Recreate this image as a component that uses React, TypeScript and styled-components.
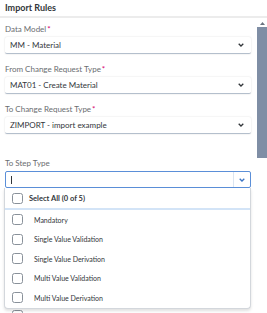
import React, { useState } from 'react'
import styled, { createGlobalStyle } from 'styled-components'

const GlobalStyle = createGlobalStyle`
  html, body {
    margin: 0;
    padding: 0;
    background: #ffffff;
  }
  body {
    font-family: Lato, 'Noto Sans', 'Liberation Sans', Arial, sans-serif;
    color: #32363a;
  }
`

const Page = styled.div`
  width: 267px;
  height: 313px;
  overflow: hidden;
  display: flex;
  flex-direction: column;
  background: #ffffff;
`

const Header = styled.div`
  height: 15px;
  padding: 0 0 1px 5px;
  display: flex;
  align-items: center;
  font-size: 9px;
  font-weight: 700;
  color: #32363a;
  border-bottom: 2px solid #ececec;
  flex-shrink: 0;
`

const Body = styled.div`
  flex: 1;
  display: flex;
  min-height: 0;
`

const Content = styled.div`
  position: relative;
  width: 246px;
  padding: 6px 0 0 5px;
  display: flex;
  flex-direction: column;
`

const Field = styled.div<{ $gap?: number }>`
  display: flex;
  flex-direction: column;
  gap: 3px;
  margin-bottom: ${p => p.$gap ?? 10}px;
`

const Label = styled.div`
  height: 10px;
  line-height: 10px;
  font-size: 8px;
  color: #6a6d70;

  span {
    color: #d5006d;
    margin-left: 1px;
  }
`

const SelectBox = styled.div`
  height: 17px;
  box-sizing: border-box;
  display: flex;
  align-items: center;
  justify-content: space-between;
  padding: 0 7px 0 5px;
  background: #ffffff;
  border-radius: 2px;
  box-shadow: 0 0 2px rgba(0, 0, 0, 0.14);
  border-bottom: 1px solid #b4bfcc;
  font-size: 8px;
  color: #32363a;
`

const InputBox = styled.div`
  height: 17px;
  box-sizing: border-box;
  display: flex;
  align-items: stretch;
  border: 1px solid #5b8fd8;
  border-radius: 2px;
  background: #ffffff;
`

const InputText = styled.div`
  flex: 1;
  display: flex;
  align-items: center;
  padding-left: 5px;

  &::before {
    content: '';
    width: 1px;
    height: 8px;
    background: #32363a;
  }
`

const InputButton = styled.div`
  width: 16px;
  display: flex;
  align-items: center;
  justify-content: center;
  border-left: 1px solid #dbe5f1;
`

const Dropdown = styled.div`
  position: absolute;
  left: 4px;
  top: 170px;
  width: 247px;
  box-sizing: border-box;
  background: #ffffff;
  border: 1px solid #d3d7dc;
  border-top: none;
  border-radius: 0 0 4px 4px;
  box-shadow: 0 2px 3px rgba(0, 0, 0, 0.12);
  z-index: 2;
`

const AllRow = styled.div`
  height: 20px;
  display: flex;
  align-items: center;
  gap: 6px;
  padding-left: 7px;
  font-size: 7.5px;
  font-weight: 700;
  color: #32363a;
  border-bottom: 2px solid #d3e4f7;
`

const ItemRow = styled.div`
  height: 19.5px;
  display: flex;
  align-items: center;
  gap: 11px;
  padding-left: 7px;
  font-size: 7px;
  color: #32363a;
`

const Box = styled.div<{ $checked?: boolean }>`
  width: 11px;
  height: 11px;
  box-sizing: border-box;
  border: 1px solid #89919a;
  border-radius: 2.5px;
  background: ${p => (p.$checked ? '#0a6ed1' : '#ffffff')};
  flex-shrink: 0;
`

const Behind = styled.div`
  margin-top: 122px;
  padding-left: 7px;
`

const Track = styled.div`
  width: 10px;
  margin-left: 6px;
  display: flex;
  flex-direction: column;
  align-items: stretch;
  padding-top: 2px;
`

const Arrow = styled.div`
  height: 7px;
  display: flex;
  justify-content: center;
  align-items: center;
`

const Thumb = styled.div`
  height: 131px;
  background: #7f8ea5;
`

const Chevron = ({ color = '#32363a' }: { color?: string }) => (
  <svg width="6" height="4" viewBox="0 0 6 4">
    <path d="M0.7 0.8 L3 3 L5.3 0.8" fill="none" stroke={color} strokeWidth="1.3" />
  </svg>
)

const selects = [
  { label: 'Data Model', value: 'MM - Material' },
  { label: 'From Change Request Type', value: 'MAT01 - Create Material' },
  { label: 'To Change Request Type', value: 'ZIMPORT - import example' },
]

const stepTypes = [
  'Mandatory',
  'Single Value Validation',
  'Single Value Derivation',
  'Multi Value Validation',
  'Multi Value Derivation',
]

export default function App() {
  const [checked, setChecked] = useState<string[]>([])

  const toggle = (name: string) =>
    setChecked(c => (c.includes(name) ? c.filter(x => x !== name) : [...c, name]))

  return (
    <Page>
      <GlobalStyle />
      <Header>Import Rules</Header>
      <Body>
        <Content>
          {selects.map((s, i) => (
            <Field key={s.label} $gap={i === 2 ? 24 : 10}>
              <Label>
                {s.label}
                <span>*</span>
              </Label>
              <SelectBox>
                {s.value}
                <Chevron />
              </SelectBox>
            </Field>
          ))}
          <Field $gap={0}>
            <Label>To Step Type</Label>
            <InputBox>
              <InputText />
              <InputButton>
                <Chevron color="#3b74c4" />
              </InputButton>
            </InputBox>
          </Field>
          <Behind>
            <Box />
          </Behind>
          <Dropdown>
            <AllRow>
              <Box $checked={checked.length === stepTypes.length} />
              Select All ({checked.length} of {stepTypes.length})
            </AllRow>
            {stepTypes.map(t => (
              <ItemRow key={t} onClick={() => toggle(t)}>
                <Box $checked={checked.includes(t)} />
                {t}
              </ItemRow>
            ))}
          </Dropdown>
        </Content>
        <Track>
          <Arrow>
            <svg width="5" height="3" viewBox="0 0 5 3">
              <path d="M0 3 L2.5 0 L5 3 Z" fill="#6b7480" />
            </svg>
          </Arrow>
          <Thumb />
        </Track>
      </Body>
    </Page>
  )
}
